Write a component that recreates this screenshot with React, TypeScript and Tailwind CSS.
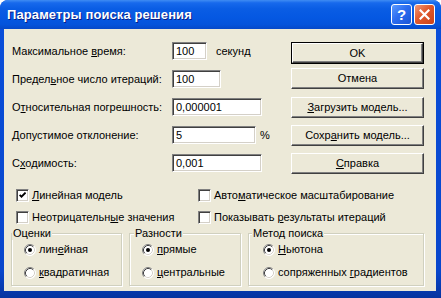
import React from "react";

const FONT = "[font-family:'Liberation_Sans',Arial,sans-serif]";

function TextBox({ value, w }: { value: string; w: string }) {
  return (
    <div
      className={`${w} h-[18px] bg-white border border-t-[#808080] border-l-[#808080] border-b-white border-r-white shadow-[inset_1px_1px_0_#404040,inset_-1px_-1px_0_#D4D0C8] flex items-center pl-[3px] shrink-0`}
    >
      {value}
    </div>
  );
}

function Btn({ children, def, h, mt }: { children: React.ReactNode; def?: boolean; h: string; mt: string }) {
  return def ? (
    <div className={`${h} ${mt} w-[133px] border border-black flex`}>
      <div className="flex-1 flex items-center justify-center border border-t-white border-l-white border-b-[#404040] border-r-[#404040] shadow-[inset_-1px_-1px_0_#808080]">
        {children}
      </div>
    </div>
  ) : (
    <div
      className={`${h} ${mt} w-[133px] flex items-center justify-center border border-t-white border-l-white border-b-[#404040] border-r-[#404040] shadow-[inset_-1px_-1px_0_#808080]`}
    >
      {children}
    </div>
  );
}

function Check({ checked, children }: { checked?: boolean; children: React.ReactNode }) {
  return (
    <div className="flex items-center h-[13px] gap-[3px]">
      <span className="w-[13px] h-[13px] bg-white border border-t-[#808080] border-l-[#808080] border-b-white border-r-white shadow-[inset_1px_1px_0_#404040,inset_-1px_-1px_0_#D4D0C8] flex items-center justify-center shrink-0">
        {checked && (
          <svg width="7" height="7" viewBox="0 0 7 7">
            <polyline points="0.6,2.8 2.5,4.7 6.6,0.6" fill="none" stroke="black" strokeWidth="1.9" />
          </svg>
        )}
      </span>
      <span className="whitespace-nowrap">{children}</span>
    </div>
  );
}

function Radio({ checked, children }: { checked?: boolean; children: React.ReactNode }) {
  return (
    <div className="flex items-center h-[13px] gap-[3px]">
      <svg width="12" height="12" viewBox="0 0 12 12" className="shrink-0">
        <circle cx="6" cy="6" r="5.5" fill="white" />
        <path d="M2.11 9.89 A5.5 5.5 0 0 1 9.89 2.11" fill="none" stroke="#808080" strokeWidth="1" />
        <path d="M2.82 9.18 A4.5 4.5 0 0 1 9.18 2.82" fill="none" stroke="#404040" strokeWidth="1" />
        <path d="M9.89 2.11 A5.5 5.5 0 0 1 2.11 9.89" fill="none" stroke="#ffffff" strokeWidth="1" />
        <path d="M9.18 2.82 A4.5 4.5 0 0 1 2.82 9.18" fill="none" stroke="#D4D0C8" strokeWidth="1" />
        {checked && <circle cx="6" cy="6" r="2" fill="black" />}
      </svg>
      <span className="whitespace-nowrap">{children}</span>
    </div>
  );
}

function Group({ title, w, lm, pl, children }: { title: string; w: string; lm: string; pl: string; children: React.ReactNode }) {
  return (
    <fieldset className={`${w} h-[59px] border border-[#D0D0BF] shadow-[inset_1px_1px_0_#fff,1px_1px_0_#fff] p-0 m-0 min-w-0`}>
      <legend className={`${lm} px-[1px] bg-[#ECE9D8] leading-[13px]`}>{title}</legend>
      <div className={`flex flex-col gap-[10px] ${pl} pt-[3px]`}>{children}</div>
    </fieldset>
  );
}

export default function App() {
  return (
    <div className={`w-[441px] h-[298px] flex flex-col rounded-t-[8px] overflow-hidden bg-[#0A4ED9] ${FONT} text-[11px] leading-[13px] text-black`}>
      {/* Title bar */}
      <div className="h-[29px] shrink-0 flex items-center pl-[7px] pr-[6px] bg-[linear-gradient(to_bottom,#3F8CF3_0%,#1769EC_10%,#0A5DE4_30%,#0558E2_60%,#0453DB_85%,#0648C8_100%)]">
        <span className="text-white font-bold text-[13px] leading-[16px] [text-shadow:1px_1px_#0A1E86] pt-[1px] tracking-[0.1px]">
          Параметры поиска решения
        </span>
        <div className="ml-auto flex gap-[2px]">
          <div className="w-[21px] h-[21px] rounded-[3px] border border-white bg-[linear-gradient(135deg,#5B9BFF_0%,#2C6DF0_45%,#1A55D6_100%)] flex items-center justify-center text-white font-bold text-[15px] leading-none">
            ?
          </div>
          <div className="w-[21px] h-[21px] rounded-[3px] border border-white bg-[linear-gradient(135deg,#F29A7A_0%,#E0582C_45%,#C8421A_100%)] flex items-center justify-center">
            <svg width="11" height="11" viewBox="0 0 11 11">
              <path d="M1.5 1.5 L9.5 9.5 M9.5 1.5 L1.5 9.5" stroke="white" strokeWidth="2.2" strokeLinecap="square" />
            </svg>
          </div>
        </div>
      </div>

      {/* Frame + client */}
      <div className="flex-1 flex flex-col pl-[4px] pr-[5px] pb-[7px] bg-[linear-gradient(to_bottom,#0A4ED9_0%,#0846CC_90%,#06339F_100%)]">
        <div className="flex-1 bg-[#ECE9D8] flex flex-col">
          {/* Top section */}
          <div className="flex pt-[13px]">
            <div className="w-[287px] pl-[8px] flex flex-col gap-[10px]">
              <div className="h-[18px] flex items-center">
                <span className="w-[160px]">
                  Максимальное <u>в</u>ремя:
                </span>
                <TextBox value="100" w="w-[35px]" />
                <span className="ml-[9px]">секунд</span>
              </div>
              <div className="h-[18px] flex items-center">
                <span className="w-[160px]">
                  Предел<u>ь</u>ное число итераций:
                </span>
                <TextBox value="100" w="w-[49px]" />
              </div>
              <div className="h-[18px] flex items-center">
                <span className="w-[160px]">
                  О<u>т</u>носительная погрешность:
                </span>
                <TextBox value="0,000001" w="w-[90px]" />
              </div>
              <div className="h-[18px] flex items-center">
                <span className="w-[160px]">
                  <u>Д</u>опустимое отклонение:
                </span>
                <TextBox value="5" w="w-[84px]" />
                <span className="ml-[4px]">%</span>
              </div>
              <div className="h-[18px] flex items-center">
                <span className="w-[160px]">
                  С<u>х</u>одимость:
                </span>
                <TextBox value="0,001" w="w-[90px]" />
              </div>
            </div>
            <div className="flex flex-col">
              <Btn def h="h-[22px]" mt="mt-0">OK</Btn>
              <Btn h="h-[21px]" mt="mt-[4px]">Отмена</Btn>
              <Btn h="h-[21px]" mt="mt-[8px]">
                <span>
                  <u>З</u>агрузить модель...
                </span>
              </Btn>
              <Btn h="h-[21px]" mt="mt-[7px]">
                <span>
                  Сохр<u>а</u>нить модель...
                </span>
              </Btn>
              <Btn h="h-[21px]" mt="mt-[7px]">
                <span>
                  <u>С</u>правка
                </span>
              </Btn>
            </div>
          </div>

          {/* Checkboxes */}
          <div className="mt-[15px] pl-[12px] grid grid-cols-[182px_1fr] gap-y-[9px]">
            <Check checked>
              <u>Л</u>инейная модель
            </Check>
            <Check>
              Авто<u>м</u>атическое масштабирование
            </Check>
            <Check>
              Неотрицательн<u>ы</u>е значения
            </Check>
            <Check>
              Показывать <u>р</u>езультаты итераций
            </Check>
          </div>

          {/* Groups */}
          <div className="mt-[3px] pl-[7px] flex gap-[7px]">
            <Group title="Оценки" w="w-[111px]" lm="ml-0" pl="pl-[12px]">
              <Radio checked>
                лин<u>е</u>йная
              </Radio>
              <Radio>
                <u>к</u>вадратичная
              </Radio>
            </Group>
            <Group title="Разности" w="w-[112px]" lm="ml-[4px]" pl="pl-[12px]">
              <Radio checked>
                <u>п</u>рямые
              </Radio>
              <Radio>
                <u>ц</u>ентральные
              </Radio>
            </Group>
            <Group title="Метод поиска" w="w-[176px]" lm="ml-[3px]" pl="pl-[14px]">
              <Radio checked>
                <u>Н</u>ьютона
              </Radio>
              <Radio>
                сопряженных <u>г</u>радиентов
              </Radio>
            </Group>
          </div>
        </div>
      </div>
    </div>
  );
}
